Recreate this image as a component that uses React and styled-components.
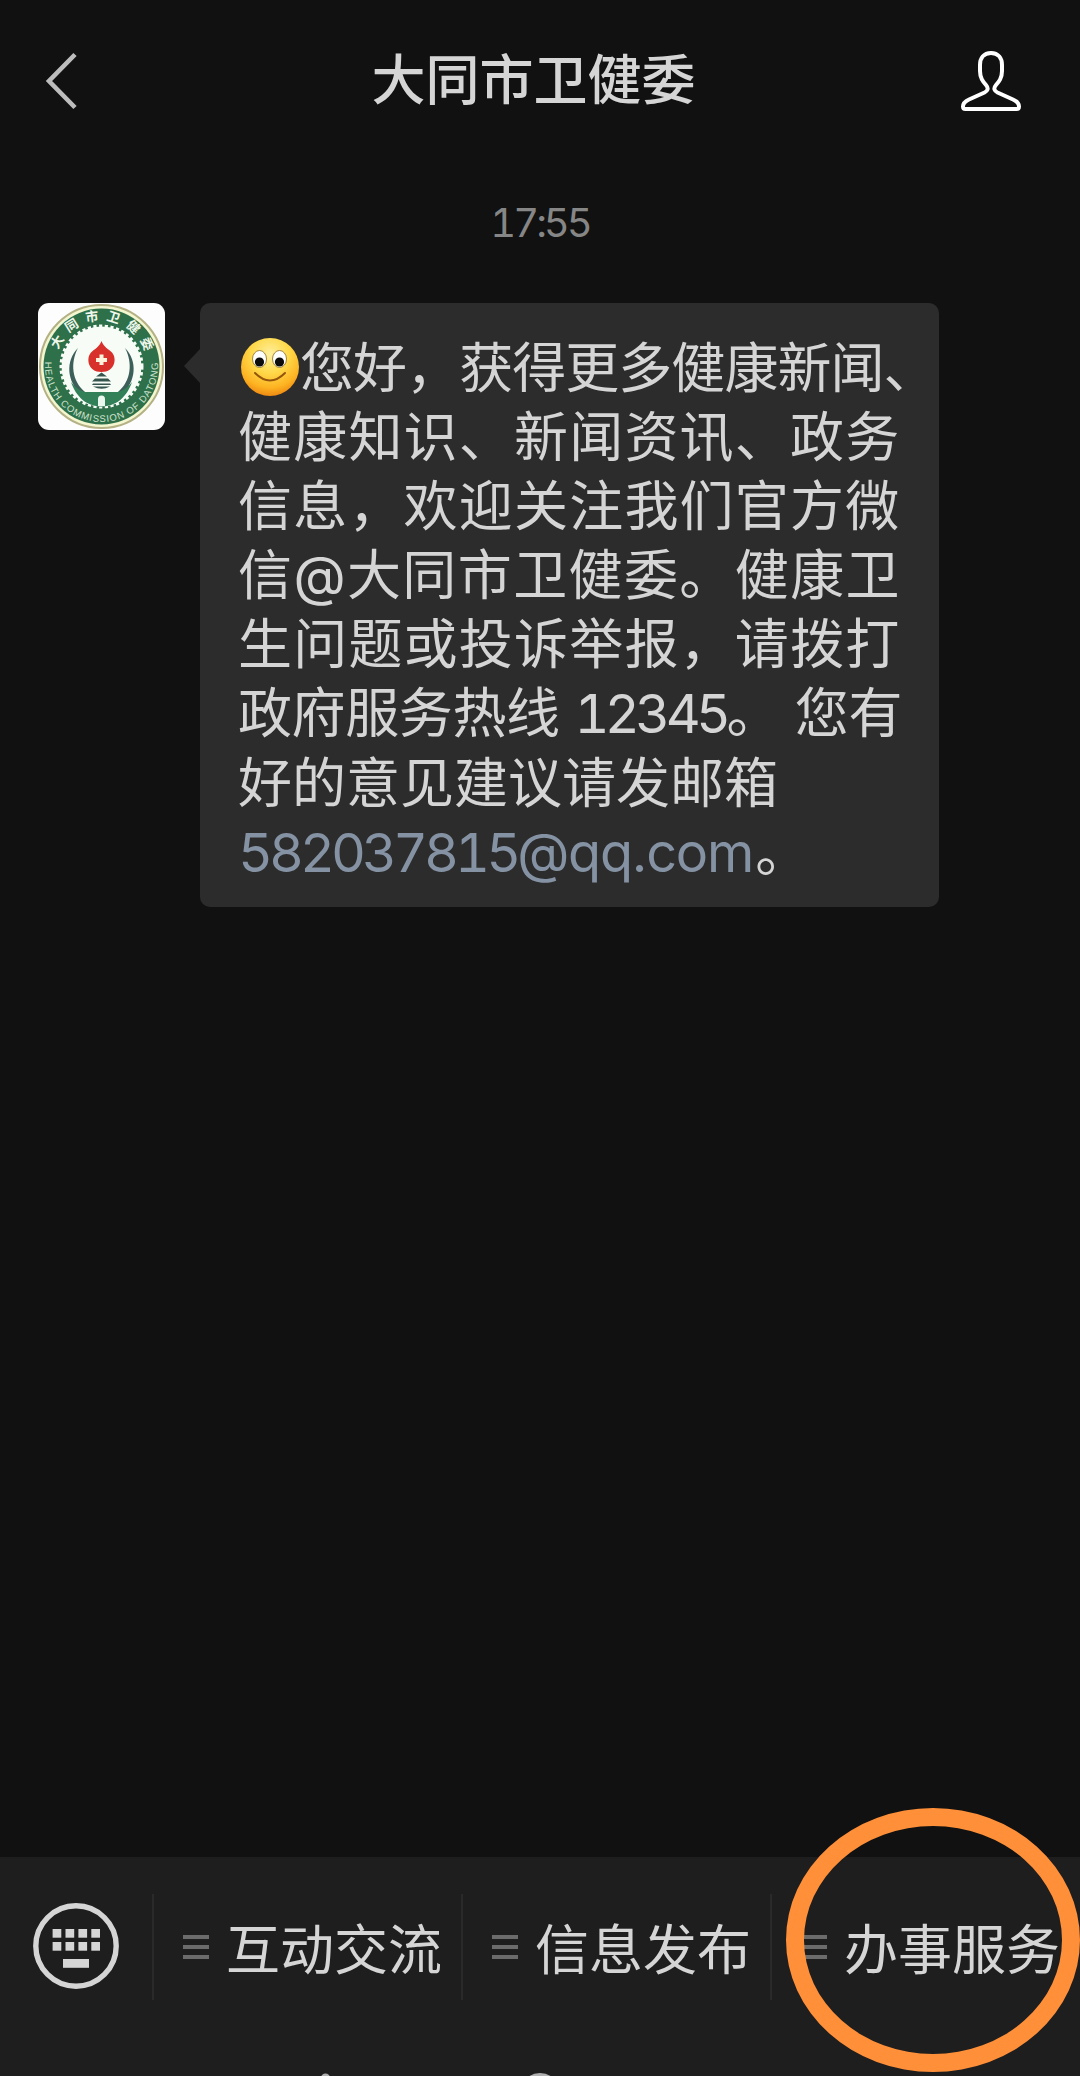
import styled, { createGlobalStyle } from 'styled-components';

const COLORS = {
  BG: '#111111',
  BAR: '#1e1e1e',
  BUBBLE: '#2c2c2c',
  TEXT: '#d5d5d5',
  TIME: '#868686',
  LINK: '#8492a3',
  DIVIDER: '#2a2a2a',
  MENU: '#6b6b6b',
  MARK: '#ff8f38',
  GREEN: '#2e7049',
  RED: '#d8302b',
};

const LINES = [
  { text: '您好，获得更多健康新闻、', spacing: -0.95, emoji: true },
  { text: '健康知识、新闻资讯、政务', spacing: 1.2 },
  { text: '信息，欢迎关注我们官方微', spacing: 1.2 },
  { text: '信@大同市卫健委。健康卫', spacing: 1.4 },
  { text: '生问题或投诉举报，请拨打', spacing: 1.2 },
  { text: '政府服务热线 ', spacing: -0.4, number: '12345', after: '。 您有' },
  { text: '好的意见建议请发邮箱', spacing: 0 },
];

const MENUS = ['互动交流', '信息发布', '办事服务'];

const BackIcon = () => (
  <svg width="34" height="60" viewBox="0 0 34 60" fill="none">
    <path d="M31 3.500 L5 30 L31 56.500" stroke="#bdbdbd" strokeWidth="4.6" />
  </svg>
);

const PersonIcon = () => (
  <svg width="62" height="62" viewBox="0 0 62 62" fill="none">
    <path
      d="M31 3 C23.500 3 20 8.500 20 15 V21 C20 28 23 31.500 26 35 C29 38.500 27.500 41 24.500 42.500 L9 49.500 C5 51.300 3 53 3 56.500 C3 58.500 3.500 59 5.500 59 H56.500 C58.500 59 59 58.500 59 56.500 C59 53 57 51.300 53 49.500 L37.500 42.500 C34.500 41 33 38.500 36 35 C39 31.500 42 28 42 21 V15 C42 8.500 38.500 3 31 3 Z"
      stroke="#ffffff"
      strokeWidth="4"
      strokeLinejoin="round"
    />
  </svg>
);

const KeyboardIcon = () => (
  <svg width="86" height="86" viewBox="0 0 86 86">
    <circle cx="43" cy="43" r="40.2" fill="none" stroke={COLORS.TEXT} strokeWidth="5.4" />
    {[0, 1].map((row) =>
      [0, 1, 2, 3].map((col) => (
        <rect
          key={`${row}-${col}`}
          x={19.6 + col * 12.9}
          y={26 + row * 13}
          width="8.7"
          height="8.7"
          fill={COLORS.TEXT}
        />
      ))
    )}
    <rect x="30" y="56" width="26" height="8.800" fill={COLORS.TEXT} />
  </svg>
);

const SmileIcon = () => (
  <svg width="60" height="60" viewBox="0 0 60 60">
    <defs>
      <radialGradient id="face" cx="0.5" cy="0.28" r="0.72">
        <stop offset="0" stopColor="#ffef9e" />
        <stop offset="0.45" stopColor="#ffd94a" />
        <stop offset="0.8" stopColor="#fdb322" />
        <stop offset="1" stopColor="#ef8a12" />
      </radialGradient>
    </defs>
    <circle cx="30" cy="30" r="29" fill="url(#face)" />
    <ellipse cx="19.500" cy="22" rx="7" ry="8.500" fill="#ffffff" stroke="#8d6a1c" strokeWidth="0.8" />
    <ellipse cx="39.500" cy="22" rx="7" ry="8.500" fill="#ffffff" stroke="#8d6a1c" strokeWidth="0.8" />
    <circle cx="19.500" cy="25" r="4.600" fill="#0c0c0c" />
    <circle cx="39.500" cy="25" r="4.600" fill="#0c0c0c" />
    <path d="M15 36 Q30 51 45 36" fill="none" stroke="#93560c" strokeWidth="2" strokeLinecap="round" />
  </svg>
);

const Emblem = () => (
  <svg width="127" height="127" viewBox="0 0 127 127">
    <defs>
      <path id="topArc" d="M17.500 63.500 A46 46 0 0 1 109.500 63.500" />
      <path id="bottomArc" d="M7.500 55 A56.500 56.500 0 1 0 119.500 55" />
    </defs>
    <circle cx="63.500" cy="63.500" r="61.500" fill="#f3f6cf" stroke="#b4b184" strokeWidth="2" />
    <circle cx="63.500" cy="63.500" r="58" fill={COLORS.GREEN} />
    <circle cx="63.500" cy="63.500" r="40" fill="#f7fcf7" />
    <circle
      cx="63.500"
      cy="63.500"
      r="40.500"
      fill="none"
      stroke="#f7fcf7"
      strokeWidth="3"
      strokeDasharray="3.200 2.500"
    />
    <path d="M40 45 C27 58 29 79 43 91 L47 89 C34 78 32 60 40 45 Z" fill="#3d5f5a" />
    <path d="M87 45 C100 58 98 79 84 91 L80 89 C93 78 95 60 87 45 Z" fill="#3d5f5a" />
    <path
      d="M33 79 C37 84 41 87.500 47 89 H80 C86 87.500 90 84 94 79 C89 94 78 103.500 63.500 103.500 C49 103.500 38 94 33 79 Z"
      fill="#328058"
    />
    <path d="M60 103 V96 A3.500 3.500 0 0 1 67 96 V103 Z" fill="#e9f7ee" />
    <path
      d="M63.500 38 C65.500 44 70.500 46 74 49.500 C79 55 77.500 69 63.500 69 C49.500 69 48 55 53 49.500 C56.500 46 61.500 44 63.500 38 Z"
      fill={COLORS.RED}
    />
    <path d="M61.500 51.500 H65.500 V55 H69 V59 H65.500 V62 H61.500 V59 H58 V55 H61.500 Z" fill="#fff3dd" />
    <path
      d="M63.500 69.500 L69 73.500 H58 Z M57 75.500 H70 L73 78.500 H54 Z M55 80.500 H72 L73 82 H54 Z M55 83.500 H72 Q63.500 88 55 83.500 Z"
      fill="#35544d"
    />
    <TopArcText>
      <textPath href="#topArc" startOffset="53%" textAnchor="middle">
        大同市卫健委
      </textPath>
    </TopArcText>
    <BottomArcText>
      <textPath href="#bottomArc" startOffset="50%" textAnchor="middle">
        HEALTH COMMISSION OF DATONG
      </textPath>
    </BottomArcText>
  </svg>
);

export default function App() {
  return (
    <>
      <GlobalStyle />
      <Screen>
        <Header>
          <HeaderButton>
            <BackIcon />
          </HeaderButton>
          <Title>大同市卫健委</Title>
          <HeaderButton>
            <PersonIcon />
          </HeaderButton>
        </Header>
        <Chat>
          <Time>17:55</Time>
          <Message>
            <Avatar>
              <Emblem />
            </Avatar>
            <Bubble>
              {LINES.map((line) => (
                <Line key={line.text} $spacing={line.spacing}>
                  {line.emoji && (
                    <Emoji>
                      <SmileIcon />
                    </Emoji>
                  )}
                  {line.text}
                  {line.number && <Digits $spacing={-4.6}>{line.number}</Digits>}
                  {line.after}
                </Line>
              ))}
              <Line $spacing={0}>
                <Link>
                  <Digits $spacing={-4}>582037815</Digits>@qq.com
                </Link>
                <Stop>。</Stop>
              </Line>
            </Bubble>
          </Message>
        </Chat>
        <Footer>
          <KeyboardButton>
            <KeyboardIcon />
          </KeyboardButton>
          {MENUS.map((menu) => (
            <MenuItem key={menu}>
              <Bars>
                <Bar />
                <Bar />
                <Bar />
              </Bars>
              <MenuText>{menu}</MenuText>
            </MenuItem>
          ))}
          <NavHints>
            <svg width="1080" height="3" viewBox="0 0 1080 3">
              <circle cx="325.500" cy="5" r="4.500" fill="#b0b0b0" />
              <circle cx="540" cy="20" r="18.500" fill="none" stroke="#b0b0b0" strokeWidth="3" />
            </svg>
          </NavHints>
          <Mark />
        </Footer>
      </Screen>
    </>
  );
}

const GlobalStyle = createGlobalStyle`
  * {
    box-sizing: border-box;
  }

  body {
    margin: 0;
    background: ${COLORS.BG};
  }

  svg {
    display: block;
  }
`;

const Screen = styled.div`
  width: 1080px;
  height: 2076px;
  display: flex;
  flex-direction: column;
  overflow: hidden;
  background: ${COLORS.BG};
  color: ${COLORS.TEXT};
  font-family: Inter, 'Noto Sans CJK SC', sans-serif;
`;

const Header = styled.header`
  height: 162px;
  flex: none;
  display: flex;
  align-items: center;
  justify-content: space-between;
  padding: 0 58px 0 44px;
`;

const HeaderButton = styled.button`
  padding: 0 0 1px;
  border: 0;
  background: none;
`;

const Title = styled.h1`
  margin: 0 0 0 29px;
  font-size: 54px;
  font-weight: 500;
  line-height: 80px;
`;

const Chat = styled.main`
  flex: 1;
  padding: 35px 38px 0;
`;

const Time = styled.p`
  margin: 0;
  height: 106px;
  color: ${COLORS.TIME};
  font-size: 40px;
  font-weight: 400;
  line-height: 52px;
  text-align: center;
  font-variant-numeric: tabular-nums;
  letter-spacing: -3px;
`;

const Message = styled.div`
  display: flex;
  align-items: flex-start;
  gap: 35px;
`;

const Avatar = styled.div`
  width: 127px;
  height: 127px;
  border-radius: 11px;
  background: #fdfdfd;
  overflow: hidden;
`;

const Bubble = styled.div`
  position: relative;
  width: 739px;
  height: 604px;
  padding: 31px 0 0 38px;
  border-radius: 10px;
  background: ${COLORS.BUBBLE};

  &::before {
    content: '';
    position: absolute;
    left: -16px;
    top: 46px;
    border: solid transparent;
    border-width: 17px 16px 17px 0;
    border-right-color: ${COLORS.BUBBLE};
  }
`;

const Line = styled.p`
  display: flex;
  align-items: center;
  height: 69.1px;
  margin: 0;
  font-size: 54px;
  line-height: 69.1px;
  white-space: pre;
  letter-spacing: ${({ $spacing }) => $spacing}px;
`;

const Emoji = styled.span`
  margin: 0 0 4px 2px;
`;

const Digits = styled.span`
  font-variant-numeric: tabular-nums;
  letter-spacing: ${({ $spacing }) => $spacing}px;
`;

const Link = styled.a`
  color: ${COLORS.LINK};
  letter-spacing: -1.200px;
`;

const Stop = styled.span`
  margin-left: 2px;
`;

const Footer = styled.footer`
  position: relative;
  height: 219px;
  flex: none;
  display: flex;
  align-items: flex-start;
  padding-top: 37px;
  background: ${COLORS.BAR};
`;

const KeyboardButton = styled.button`
  width: 152px;
  height: 106px;
  display: flex;
  align-items: flex-start;
  padding: 9px 0 0 33px;
  border: 0;
  background: none;
`;

const MenuItem = styled.div`
  width: 309px;
  height: 106px;
  display: flex;
  align-items: center;
  padding-left: 29px;
  border-left: 2px solid ${COLORS.DIVIDER};
`;

const Bars = styled.span`
  width: 26px;
  margin-right: 17px;
  display: flex;
  flex-direction: column;
  gap: 6px;
`;

const Bar = styled.i`
  height: 4px;
  background: ${COLORS.MENU};
`;

const MenuText = styled.span`
  padding-top: 8px;
  font-size: 54px;
  line-height: 80px;
  white-space: nowrap;
`;

/* only the upper edge of the system keys is on screen */
const NavHints = styled.div`
  position: absolute;
  left: 0;
  bottom: 0;
`;

const Mark = styled.div`
  position: absolute;
  left: 786px;
  top: -49px;
  width: 294px;
  height: 264px;
  border: 18px solid ${COLORS.MARK};
  border-radius: 50%;
`;

const TopArcText = styled.text`
  font-family: 'Noto Sans CJK SC', sans-serif;
  font-size: 13px;
  font-weight: 700;
  letter-spacing: 7px;
  fill: #eef7ea;
`;

const BottomArcText = styled.text`
  font-family: 'Liberation Sans', sans-serif;
  font-size: 9.500px;
  letter-spacing: 0.9px;
  fill: #cfe3cf;
`;
